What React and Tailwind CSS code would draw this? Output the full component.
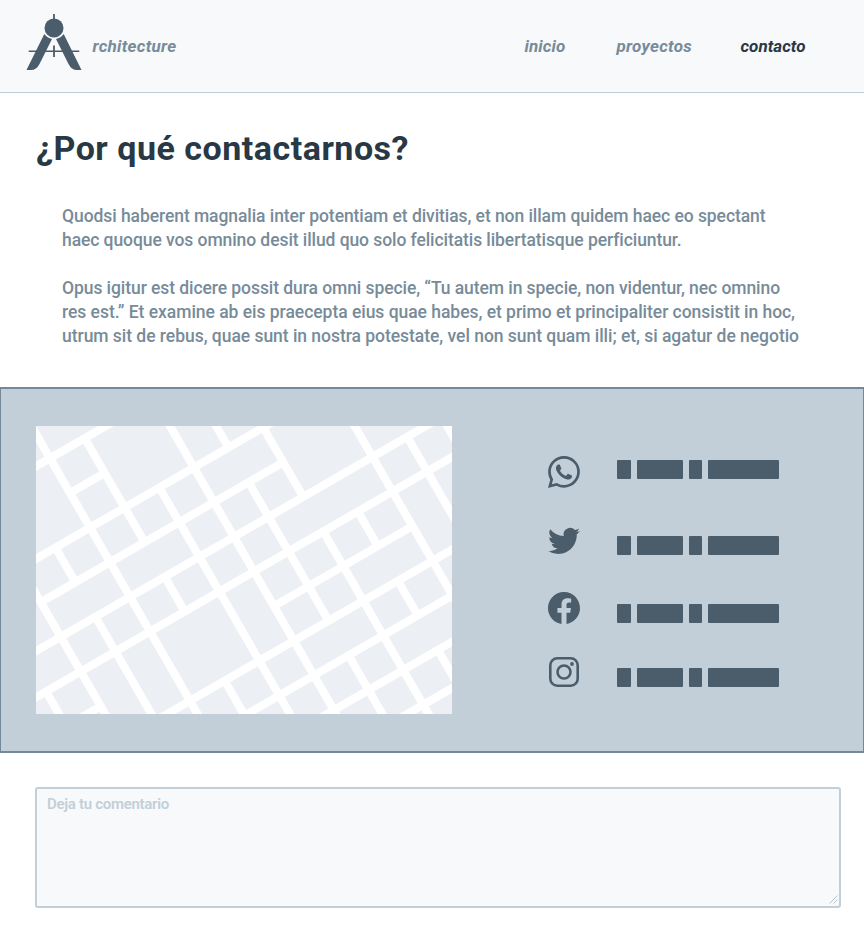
import { useLayoutEffect, useRef } from "react";
import { BsWhatsapp, BsTwitter, BsFacebook } from "react-icons/bs";

// Single line of text whose tracking is adjusted to fill the given measure.
function Line({ width, className = "", children }) {
  const ref = useRef(null);
  useLayoutEffect(() => {
    const el = ref.current;
    el.style.letterSpacing = "0px";
    const natural = el.getBoundingClientRect().width;
    el.style.letterSpacing = `${(width - natural) / children.length}px`;
  }, [width, children]);
  return (
    <span className={`block w-max whitespace-nowrap ${className}`} ref={ref}>
      {children}
    </span>
  );
}

function Logo() {
  return (
    <svg className="h-[58px] w-[56px] shrink-0 text-[#4b5c6a]" viewBox="26 13 56 58" fill="currentColor">
      <path d="M53.100 14h1.800v6h-1.800zM28.700 50.400h50.600v1.700h-50.600zM53.100 45.500h1.800v11.500h-1.800z" />
      <path d="M44.300 34Q47.200 38 52 39L39.500 64Q36.500 70 31 70H26.500Z" />
      <path d="M63.700 34Q60.800 38 56 39L68.500 64Q71.500 70 77 70H81.500Z" />
      <circle cx="54" cy="28" r="9.500" />
    </svg>
  );
}

function InstagramIcon() {
  return (
    <svg className="h-8 w-8" viewBox="0 0 32 32" fill="none" stroke="currentColor" strokeWidth="2.600">
      <rect x="2.300" y="2.300" width="27.400" height="27.400" rx="7" />
      <circle cx="16" cy="16" r="6.500" />
      <circle cx="24" cy="8" r="1.900" fill="currentColor" stroke="none" />
    </svg>
  );
}

// Streets as [line, from, to] on a 40-unit grid rotated by 30 degrees.
const streets = [
  [0, -3, 4], [1, 0, 1], [2, -4, 8], [3, -2, 5], [4, -5, 10], [5, -5, 10],
  [6, -3, -2], [6, 3, 7], [7, -3, 9], [8, -1, 9], [9, 1, 9], [10, 3, 8],
];
const avenues = [
  [-3, 5, 7], [-2, 1, 9], [-1, 2, 3], [-1, 4, 9], [0, -2, 10],
  [1, 0, 3], [1, 4, 5], [1, 7, 9], [2, 2, 10], [3, -1, 10],
  [4, 0, 2], [4, 3, 7], [4, 8, 11], [5, 2, 4], [5, 5, 12],
  [6, 5, 6], [6, 7, 8], [6, 9, 11], [7, 2, 10], [8, 4, 9], [9, 3, 6],
];

function CityMap() {
  return (
    <svg className="h-[288px] w-[416px] shrink-0 bg-[#ecf0f5]" viewBox="0 0 416 288">
      <g transform="translate(14 32.300) rotate(-30)" stroke="#fff" strokeWidth="8">
        {streets.map(([j, a, b]) => (
          <line key={`s${j}${a}`} x1={a * 40} x2={b * 40} y1={j * 40} y2={j * 40} />
        ))}
        {avenues.map(([i, a, b]) => (
          <line key={`a${i}${a}`} x1={i * 40} x2={i * 40} y1={a * 40} y2={b * 40} />
        ))}
      </g>
    </svg>
  );
}

function Redacted() {
  return (
    <div className="flex h-[19px]">
      <div className="mr-[6px] w-[14px] rounded-[1px] bg-[#4b5c6a]" />
      <div className="mr-[6px] w-[46.400px] rounded-[1px] bg-[#4b5c6a]" />
      <div className="mr-[6px] w-[12.600px] rounded-[1px] bg-[#4b5c6a]" />
      <div className="w-[71px] rounded-[1px] bg-[#4b5c6a]" />
    </div>
  );
}

export default function App() {
  return (
    <div className="h-[944px] w-[864px] overflow-hidden bg-white font-['Roboto',sans-serif] font-medium text-[#778b99]">
      <header className="flex h-[93px] border-b border-[#bccfdb] bg-[#f8f9fb] pl-[26px] text-[17px] font-bold italic">
        <div className="flex w-[498.500px] pt-[13px]">
          <Logo />
          <Line width={84} className="ml-[10.500px] pt-[21px] leading-6">rchitecture</Line>
        </div>
        <nav className="flex pt-[34px] leading-6">
          <a className="w-[92px]"><Line width={41}>inicio</Line></a>
          <a className="w-[124px]"><Line width={75.5}>proyectos</Line></a>
          <a className="text-[#293845]"><Line width={65}>contacto</Line></a>
        </nav>
      </header>

      <main>
        <h1 className="pl-[36px] pt-[35px] text-[34px] font-bold leading-[40px] text-[#293845]">
          <Line width={373}>¿Por qué contactarnos?</Line>
        </h1>
        <div className="mt-[36px] pl-[62px] text-[17.500px] leading-6">
          <p>
            <Line width={703.5}>Quodsi haberent magnalia inter potentiam et divitias, et non illam quidem haec eo spectant</Line>
            <Line width={619}>haec quoque vos omnino desit illud quo solo felicitatis libertatisque perficiuntur.</Line>
          </p>
          <p className="mt-6">
            <Line width={718}>Opus igitur est dicere possit dura omni specie, “Tu autem in specie, non videntur, nec omnino</Line>
            <Line width={733}>res est.” Et examine ab eis praecepta eius quae habes, et primo et principaliter consistit in hoc,</Line>
            <Line width={737}>utrum sit de rebus, quae sunt in nostra potestate, vel non sunt quam illi; et, si agatur de negotio</Line>
          </p>
        </div>

        <section className="mt-[39px] flex h-[366px] border-x border-y-2 border-[#758898] bg-[#c3cfd8] pl-[35px] pt-[37px]">
          <CityMap />
          <ul className="ml-[96px] mt-[30px] text-[#4b5c6a]">
            <li className="flex h-[68px] gap-[37px]">
              <BsWhatsapp className="h-8 w-8" />
              <div className="pt-1"><Redacted /></div>
            </li>
            <li className="flex h-[68px] gap-[37px]">
              <BsTwitter className="h-8 w-8" />
              <div className="pt-3"><Redacted /></div>
            </li>
            <li className="flex h-16 gap-[37px]">
              <BsFacebook className="h-8 w-8" />
              <div className="pt-3"><Redacted /></div>
            </li>
            <li className="flex h-8 gap-[37px]">
              <InstagramIcon />
              <div className="pt-3"><Redacted /></div>
            </li>
          </ul>
        </section>

        <form className="relative ml-[35px] mt-[34px] h-[121px] w-[806px] rounded-[3px] border-2 border-[#c3cfd8] bg-[#f8f9fb] px-[10px] pt-[3px] text-[15px] font-semibold leading-6 text-[#c3cfd8]">
          <Line width={122}>Deja tu comentario</Line>
          <svg className="absolute bottom-[2px] right-[1px] h-[9px] w-[9px]" viewBox="0 0 9 9" stroke="#b3c2ce" strokeWidth="1">
            <path d="M.5 8.500l8-8M4.500 8.500l4-4" />
          </svg>
        </form>
      </main>
    </div>
  );
}
